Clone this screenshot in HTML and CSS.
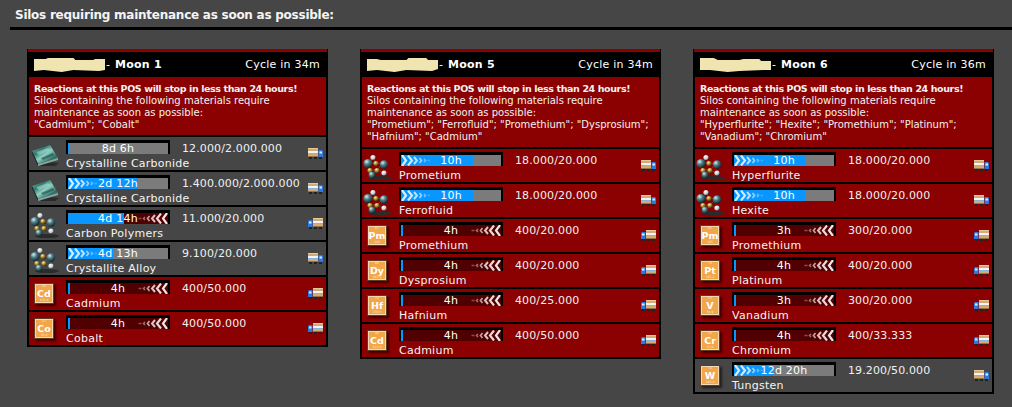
FILE: index.html
```html
<!DOCTYPE html>
<html lang="en">
<head>
<meta charset="utf-8">
<title>Silos</title>
<link rel="stylesheet" href="styles.css">
</head>
<body>
<svg class="defs" width="0" height="0" aria-hidden="true">
  <defs>
    <linearGradient id="cg" x1="0" y1="0" x2="1" y2="1">
      <stop offset="0" stop-color="#6fb8a8"/><stop offset=".3" stop-color="#2f7a70"/><stop offset=".5" stop-color="#8fd0c2"/><stop offset=".75" stop-color="#2f6f66"/><stop offset="1" stop-color="#4f9488"/>
    </linearGradient>
    <radialGradient id="ball" cx=".35" cy=".3" r=".8"><stop offset="0" stop-color="#d6eef0"/><stop offset=".4" stop-color="#4a7d86"/><stop offset="1" stop-color="#0a1418"/></radialGradient>
    <radialGradient id="gold" cx=".35" cy=".3" r=".8"><stop offset="0" stop-color="#fff0a0"/><stop offset=".5" stop-color="#a88428"/><stop offset="1" stop-color="#241c06"/></radialGradient>
    <radialGradient id="white" cx=".35" cy=".3" r=".8"><stop offset="0" stop-color="#fff"/><stop offset=".6" stop-color="#c4d0d4"/><stop offset="1" stop-color="#39464a"/></radialGradient>
    <symbol id="crystal" viewBox="0 0 28 22">
      <path d="M6 17 L28 19 L24 22 L10 22 Z" fill="#2a2a2a"/>
      <path d="M1 7 L19 1 L27 14 L7 20 Z" fill="url(#cg)"/>
      <path d="M1 7 L7 20 L7 22 L1 9 Z" fill="#16241f"/>
      <path d="M7 20 L27 14 L27 16 L7 22 Z" fill="#8aa8a0"/>
      <path d="M5 8 L17 4 L19 6 L8 11 Z" fill="#b6e2da" opacity=".5"/>
      <path d="M10 14 L22 9 L23 11 L12 16 Z" fill="#173f3a" opacity=".55"/>
    </symbol>
    <symbol id="molecule" viewBox="0 0 30 26">
      <ellipse cx="17" cy="24" rx="12" ry="2" fill="#2b2b2b"/>
      <path d="M10 3 L13 9 L20 10 L14 16 L7 16 L5 9 L13 9 M14 16 L20 19 M7 16 L9 21" stroke="#555" stroke-width=".8" fill="none"/>
      <circle cx="10" cy="3.5" r="2.6" fill="url(#white)"/>
      <circle cx="5" cy="9.5" r="4.6" fill="url(#ball)"/>
      <circle cx="13" cy="9.5" r="2.6" fill="url(#gold)"/>
      <circle cx="21" cy="10.5" r="4.2" fill="url(#ball)"/>
      <circle cx="7" cy="16.5" r="2.6" fill="url(#gold)"/>
      <circle cx="14" cy="16.5" r="2.6" fill="url(#gold)"/>
      <circle cx="21" cy="19" r="2.6" fill="url(#white)"/>
      <circle cx="9" cy="21" r="3.4" fill="url(#ball)"/>
    </symbol>
    <symbol id="truck" viewBox="0 0 15 11">
      <rect x="0" y="0" width="10" height="9" fill="#d4aa76"/>
      <rect x="0" y="0" width="10" height="1" fill="#e6c898"/>
      <rect x="0" y="3" width="10" height="2" fill="#f4f4f4"/>
      <rect x="0" y="5" width="10" height="1" fill="#8fb0d8"/>
      <rect x="0" y="8" width="10" height="1" fill="#96744a"/>
      <path d="M10.500 2 H14 L15 3 V9 H10.500 Z" fill="#2f78e0"/>
      <rect x="11.500" y="3.500" width="2.500" height="2" fill="#e0ecff"/>
      <rect x="1" y="9" width="3" height="2" fill="#222"/>
      <rect x="6" y="9" width="3" height="2" fill="#222"/>
      <rect x="11" y="9" width="3" height="2" fill="#222"/>
    </symbol>
    <symbol id="chev-r" viewBox="0 0 30 11">
      <g fill="none" stroke="#d6eeff" stroke-linecap="butt">
        <path d="M1 0 L5 5.500 L1 11" stroke-width="2.200"/>
        <path d="M7 0.500 L11 5.500 L7 10.500" stroke-width="2.200" opacity=".95"/>
        <path d="M13 2 L16 5.500 L13 9" stroke-width="2" opacity=".85"/>
        <path d="M18.500 3 L20.500 5.500 L18.500 8" stroke-width="1.700" opacity=".7"/>
        <path d="M23 4 L24.500 5.500 L23 7" stroke-width="1.500" opacity=".5"/>
        <path d="M26.500 5.500 H29" stroke-width="1.500" opacity=".25"/>
      </g>
    </symbol>
    <symbol id="chev-l" viewBox="0 0 30 11">
      <g fill="none" stroke="#f4e4e4" stroke-linecap="butt">
        <path d="M29 0 L25 5.500 L29 11" stroke-width="2.200"/>
        <path d="M23 0.500 L19 5.500 L23 10.500" stroke-width="2.200" opacity=".95"/>
        <path d="M17 2 L14 5.500 L17 9" stroke-width="2" opacity=".85"/>
        <path d="M11.500 3 L9.500 5.500 L11.500 8" stroke-width="1.700" opacity=".7"/>
        <path d="M7 4 L5.500 5.500 L7 7" stroke-width="1.500" opacity=".5"/>
        <path d="M0.500 5.500 H3.500" stroke-width="1.500" opacity=".35"/>
      </g>
    </symbol>
  </defs>
</svg>

<header class="page-head"><h1 class="page-title">Silos requiring maintenance as soon as possible:</h1></header>

<main class="cards">

<section class="card">
  <div class="card-head">
    <div class="pos"><svg class="blur" viewBox="0 0 72 14"><path d="M0 1 H12 L14 0 H40 L42 2 H60 L62 1 H72 V12 L66 13 L40 12 L28 14 L10 12 L0 13 Z"/></svg><span class="dash">-</span><b>Moon 1</b></div>
    <div class="cycle">Cycle in 34m</div>
  </div>
  <div class="alert"><b>Reactions at this POS will stop in less than 24 hours!</b><br>Silos containing the following materials require<br>maintenance as soon as possible:<br>"Cadmium"; "Cobalt"</div>
  <div class="rows">
    <div class="row">
      <svg class="ico crystal"><use href="#crystal"/></svg>
      <div class="bar grey"><i class="fill" style="width:1%"></i><span class="time">8d 6h</span></div>
      <div class="val">12.000/2.000.000</div>
      <svg class="truck"><use href="#truck"/></svg>
      <div class="name">Crystalline Carbonide</div>
    </div>
    <div class="row">
      <svg class="ico crystal"><use href="#crystal"/></svg>
      <div class="bar grey"><i class="fill" style="width:70%"></i><svg class="chev right"><use href="#chev-r"/></svg><span class="time">2d 12h</span></div>
      <div class="val">1.400.000/2.000.000</div>
      <svg class="truck"><use href="#truck"/></svg>
      <div class="name">Crystalline Carbonide</div>
    </div>
    <div class="row">
      <svg class="ico mol"><use href="#molecule"/></svg>
      <div class="bar dark"><i class="fill" style="width:56%"></i><svg class="chev left"><use href="#chev-l"/></svg><span class="time">4d 14h</span></div>
      <div class="val">11.000/20.000</div>
      <svg class="truck flip"><use href="#truck"/></svg>
      <div class="name">Carbon Polymers</div>
    </div>
    <div class="row">
      <svg class="ico mol"><use href="#molecule"/></svg>
      <div class="bar grey"><i class="fill" style="width:45%"></i><svg class="chev right"><use href="#chev-r"/></svg><span class="time">4d 13h</span></div>
      <div class="val">9.100/20.000</div>
      <svg class="truck"><use href="#truck"/></svg>
      <div class="name">Crystallite Alloy</div>
    </div>
    <div class="row red">
      <div class="tile"><small>48</small><b>Cd</b><small>112.4</small></div>
      <div class="bar dark"><i class="fill" style="width:2%"></i><svg class="chev left"><use href="#chev-l"/></svg><span class="time">4h</span></div>
      <div class="val">400/50.000</div>
      <svg class="truck flip"><use href="#truck"/></svg>
      <div class="name">Cadmium</div>
    </div>
    <div class="row red">
      <div class="tile"><small>27</small><b>Co</b><small>58.9</small></div>
      <div class="bar dark"><i class="fill" style="width:2%"></i><svg class="chev left"><use href="#chev-l"/></svg><span class="time">4h</span></div>
      <div class="val">400/50.000</div>
      <svg class="truck flip"><use href="#truck"/></svg>
      <div class="name">Cobalt</div>
    </div>
  </div>
</section>

<section class="card">
  <div class="card-head">
    <div class="pos"><svg class="blur" viewBox="0 0 72 14"><path d="M0 1 H10 L14 2 H40 L42 0 H60 L62 2 H72 V11 L66 13 L40 12 L28 14 L10 12 L0 13 Z"/></svg><span class="dash">-</span><b>Moon 5</b></div>
    <div class="cycle">Cycle in 34m</div>
  </div>
  <div class="alert"><b>Reactions at this POS will stop in less than 24 hours!</b><br>Silos containing the following materials require<br>maintenance as soon as possible:<br>"Prometium"; "Ferrofluid"; "Promethium"; "Dysprosium";<br>"Hafnium"; "Cadmium"</div>
  <div class="rows">
    <div class="row red">
      <svg class="ico mol"><use href="#molecule"/></svg>
      <div class="bar grey"><i class="fill" style="width:72%"></i><svg class="chev right"><use href="#chev-r"/></svg><span class="time">10h</span></div>
      <div class="val">18.000/20.000</div>
      <svg class="truck"><use href="#truck"/></svg>
      <div class="name">Prometium</div>
    </div>
    <div class="row red">
      <svg class="ico mol"><use href="#molecule"/></svg>
      <div class="bar grey"><i class="fill" style="width:72%"></i><svg class="chev right"><use href="#chev-r"/></svg><span class="time">10h</span></div>
      <div class="val">18.000/20.000</div>
      <svg class="truck"><use href="#truck"/></svg>
      <div class="name">Ferrofluid</div>
    </div>
    <div class="row red">
      <div class="tile"><small>61</small><b>Pm</b><small>145</small></div>
      <div class="bar dark"><i class="fill" style="width:2%"></i><svg class="chev left"><use href="#chev-l"/></svg><span class="time">4h</span></div>
      <div class="val">400/20.000</div>
      <svg class="truck flip"><use href="#truck"/></svg>
      <div class="name">Promethium</div>
    </div>
    <div class="row red">
      <div class="tile"><small>66</small><b>Dy</b><small>162.5</small></div>
      <div class="bar dark"><i class="fill" style="width:2%"></i><svg class="chev left"><use href="#chev-l"/></svg><span class="time">4h</span></div>
      <div class="val">400/20.000</div>
      <svg class="truck flip"><use href="#truck"/></svg>
      <div class="name">Dysprosium</div>
    </div>
    <div class="row red">
      <div class="tile"><small>72</small><b>Hf</b><small>178.5</small></div>
      <div class="bar dark"><i class="fill" style="width:2%"></i><svg class="chev left"><use href="#chev-l"/></svg><span class="time">4h</span></div>
      <div class="val">400/25.000</div>
      <svg class="truck flip"><use href="#truck"/></svg>
      <div class="name">Hafnium</div>
    </div>
    <div class="row red">
      <div class="tile"><small>48</small><b>Cd</b><small>112.4</small></div>
      <div class="bar dark"><i class="fill" style="width:2%"></i><svg class="chev left"><use href="#chev-l"/></svg><span class="time">4h</span></div>
      <div class="val">400/50.000</div>
      <svg class="truck flip"><use href="#truck"/></svg>
      <div class="name">Cadmium</div>
    </div>
  </div>
</section>

<section class="card">
  <div class="card-head">
    <div class="pos"><svg class="blur" viewBox="0 0 72 14"><path d="M0 0 H14 L18 2 H40 L44 1 H60 L62 3 H72 V12 L66 12 L40 13 L28 14 L10 12 L0 12 Z"/></svg><span class="dash">-</span><b>Moon 6</b></div>
    <div class="cycle">Cycle in 36m</div>
  </div>
  <div class="alert"><b>Reactions at this POS will stop in less than 24 hours!</b><br>Silos containing the following materials require<br>maintenance as soon as possible:<br>"Hyperflurite"; "Hexite"; "Promethium"; "Platinum";<br>"Vanadium"; "Chromium"</div>
  <div class="rows">
    <div class="row red">
      <svg class="ico mol"><use href="#molecule"/></svg>
      <div class="bar grey"><i class="fill" style="width:72%"></i><svg class="chev right"><use href="#chev-r"/></svg><span class="time">10h</span></div>
      <div class="val">18.000/20.000</div>
      <svg class="truck"><use href="#truck"/></svg>
      <div class="name">Hyperflurite</div>
    </div>
    <div class="row red">
      <svg class="ico mol"><use href="#molecule"/></svg>
      <div class="bar grey"><i class="fill" style="width:72%"></i><svg class="chev right"><use href="#chev-r"/></svg><span class="time">10h</span></div>
      <div class="val">18.000/20.000</div>
      <svg class="truck"><use href="#truck"/></svg>
      <div class="name">Hexite</div>
    </div>
    <div class="row red">
      <div class="tile"><small>61</small><b>Pm</b><small>145</small></div>
      <div class="bar dark"><i class="fill" style="width:2%"></i><svg class="chev left"><use href="#chev-l"/></svg><span class="time">3h</span></div>
      <div class="val">300/20.000</div>
      <svg class="truck flip"><use href="#truck"/></svg>
      <div class="name">Promethium</div>
    </div>
    <div class="row red">
      <div class="tile"><small>78</small><b>Pt</b><small>195.1</small></div>
      <div class="bar dark"><i class="fill" style="width:2%"></i><svg class="chev left"><use href="#chev-l"/></svg><span class="time">4h</span></div>
      <div class="val">400/20.000</div>
      <svg class="truck flip"><use href="#truck"/></svg>
      <div class="name">Platinum</div>
    </div>
    <div class="row red">
      <div class="tile"><small>23</small><b>V</b><small>50.9</small></div>
      <div class="bar dark"><i class="fill" style="width:2%"></i><svg class="chev left"><use href="#chev-l"/></svg><span class="time">3h</span></div>
      <div class="val">300/20.000</div>
      <svg class="truck flip"><use href="#truck"/></svg>
      <div class="name">Vanadium</div>
    </div>
    <div class="row red">
      <div class="tile"><small>24</small><b>Cr</b><small>52.0</small></div>
      <div class="bar dark"><i class="fill" style="width:2%"></i><svg class="chev left"><use href="#chev-l"/></svg><span class="time">4h</span></div>
      <div class="val">400/33.333</div>
      <svg class="truck flip"><use href="#truck"/></svg>
      <div class="name">Chromium</div>
    </div>
    <div class="row">
      <div class="tile"><small>74</small><b>W</b><small>183.8</small></div>
      <div class="bar grey"><i class="fill" style="width:39%"></i><svg class="chev right"><use href="#chev-r"/></svg><span class="time">12d 20h</span></div>
      <div class="val">19.200/50.000</div>
      <svg class="truck"><use href="#truck"/></svg>
      <div class="name">Tungsten</div>
    </div>
  </div>
</section>

</main>
</body>
</html>
```
FILE: styles.css
```css
* { box-sizing: border-box; }
html, body { margin: 0; padding: 0; }
body {
  background: #464646;
  color: #f4f4f4;
  font-family: "DejaVu Sans", Verdana, sans-serif;
  font-size: 11px;
  height: 407px;
  overflow: hidden;
}
.defs { display: block; height: 0; }
.page-head {
  margin-left: 10px;
  height: 30px;
  padding: 8px 0 0 5px;
  border-bottom: 3px solid #000;
}
.page-title {
  margin: 0;
  font-size: 12px;
  line-height: 15px;
  font-weight: bold;
  letter-spacing: -.25px;
  color: #f4f4f4;
}
.cards {
  display: flex;
  align-items: flex-start;
  gap: 32px;
  padding: 19px 0 0 27px;
}
.card {
  width: 301px;
  background: #000;
  border: solid #000;
  border-width: 0 2px 2px;
}
.card::before {
  content: "";
  display: block;
  height: 3px;
  margin: 0 -1px;
  background: #8b0000;
}
.card-head {
  height: 25px;
  display: flex;
  align-items: center;
  justify-content: space-between;
  padding: 0 6px 0 5px;
  color: #fff;
}
.pos { display: flex; align-items: center; white-space: pre; }
.pos b { font-size: 11px; letter-spacing: .25px; }
.dash { margin-right: 5px; }
.blur { width: 71px; height: 14px; margin-right: 1px; }
.blur path { fill: #f0e4b0; }
.cycle { font-size: 11px; letter-spacing: .25px; }
.alert {
  background: #8b0000;
  color: #f2f2f2;
  font-size: 10px;
  line-height: 12px;
  padding: 6px 5px 4px;
  white-space: nowrap;
}
.alert b { font-size: 9.500px; letter-spacing: -.39px; }
.rows { display: flex; flex-direction: column; gap: 2px; padding-top: 2px; }
.row {
  height: 33px;
  background: #464646;
  display: grid;
  grid-template-columns: 37px 116px 1fr 18px;
  grid-template-rows: 20px 13px;
  position: relative;
}
.row.red { background: #8b0000; }
.ico { grid-column: 1; grid-row: 1 / 3; display: block; }
.crystal { width: 28px; height: 22px; margin: 7px 0 0 2px; }
.mol { width: 30px; height: 26px; margin: 5px 0 0 1px; }
.tile {
  grid-column: 1;
  grid-row: 1 / 3;
  width: 20px;
  height: 21px;
  margin: 6px 0 0 5px;
  background: #f2a64a;
  border: 1px solid #5a3c28;
  box-shadow: inset 0 0 0 1px #f8d8b0, 2px 2px 2px rgba(0,0,0,.55);
  padding: 1px 0;
  display: flex;
  flex-direction: column;
  align-items: center;
  justify-content: space-between;
  color: #fff;
  line-height: 1;
  overflow: hidden;
}
.tile b { font-size: 9.500px; line-height: 9px; }
.tile small { font-size: 3px; line-height: 3px; color: #ffe9c8; }
.bar {
  grid-column: 2;
  grid-row: 1;
  width: 104px;
  height: 14px;
  margin-top: 3px;
  border: solid #000;
  border-width: 3px 2px 0;
  position: relative;
  overflow: hidden;
  text-align: center;
}
.bar.grey { background: #7b7b7b; }
.bar.dark { background: #500000; }
.fill { position: absolute; left: 0; top: 0; bottom: 0; background: #0a96ff; }
.chev { position: absolute; top: 0; width: 30px; height: 11px; }
.chev.right { left: 0; }
.chev.left { right: 0; }
.time {
  position: relative;
  display: block;
  font-size: 11px;
  line-height: 11px;
  letter-spacing: .25px;
  color: #fff;
}
.val {
  grid-column: 3;
  grid-row: 1;
  padding-top: 5px;
  line-height: 14px;
  letter-spacing: .12px;
  color: #f0f0f0;
  white-space: nowrap;
}
.truck {
  grid-column: 4;
  grid-row: 1 / 3;
  width: 15px;
  height: 11px;
  margin-top: 11px;
}
.truck.flip { transform: scaleX(-1); }
.name {
  grid-column: 2 / 4;
  grid-row: 2;
  line-height: 14px;
  letter-spacing: .25px;
  color: #f4f4f4;
  white-space: nowrap;
}
```
